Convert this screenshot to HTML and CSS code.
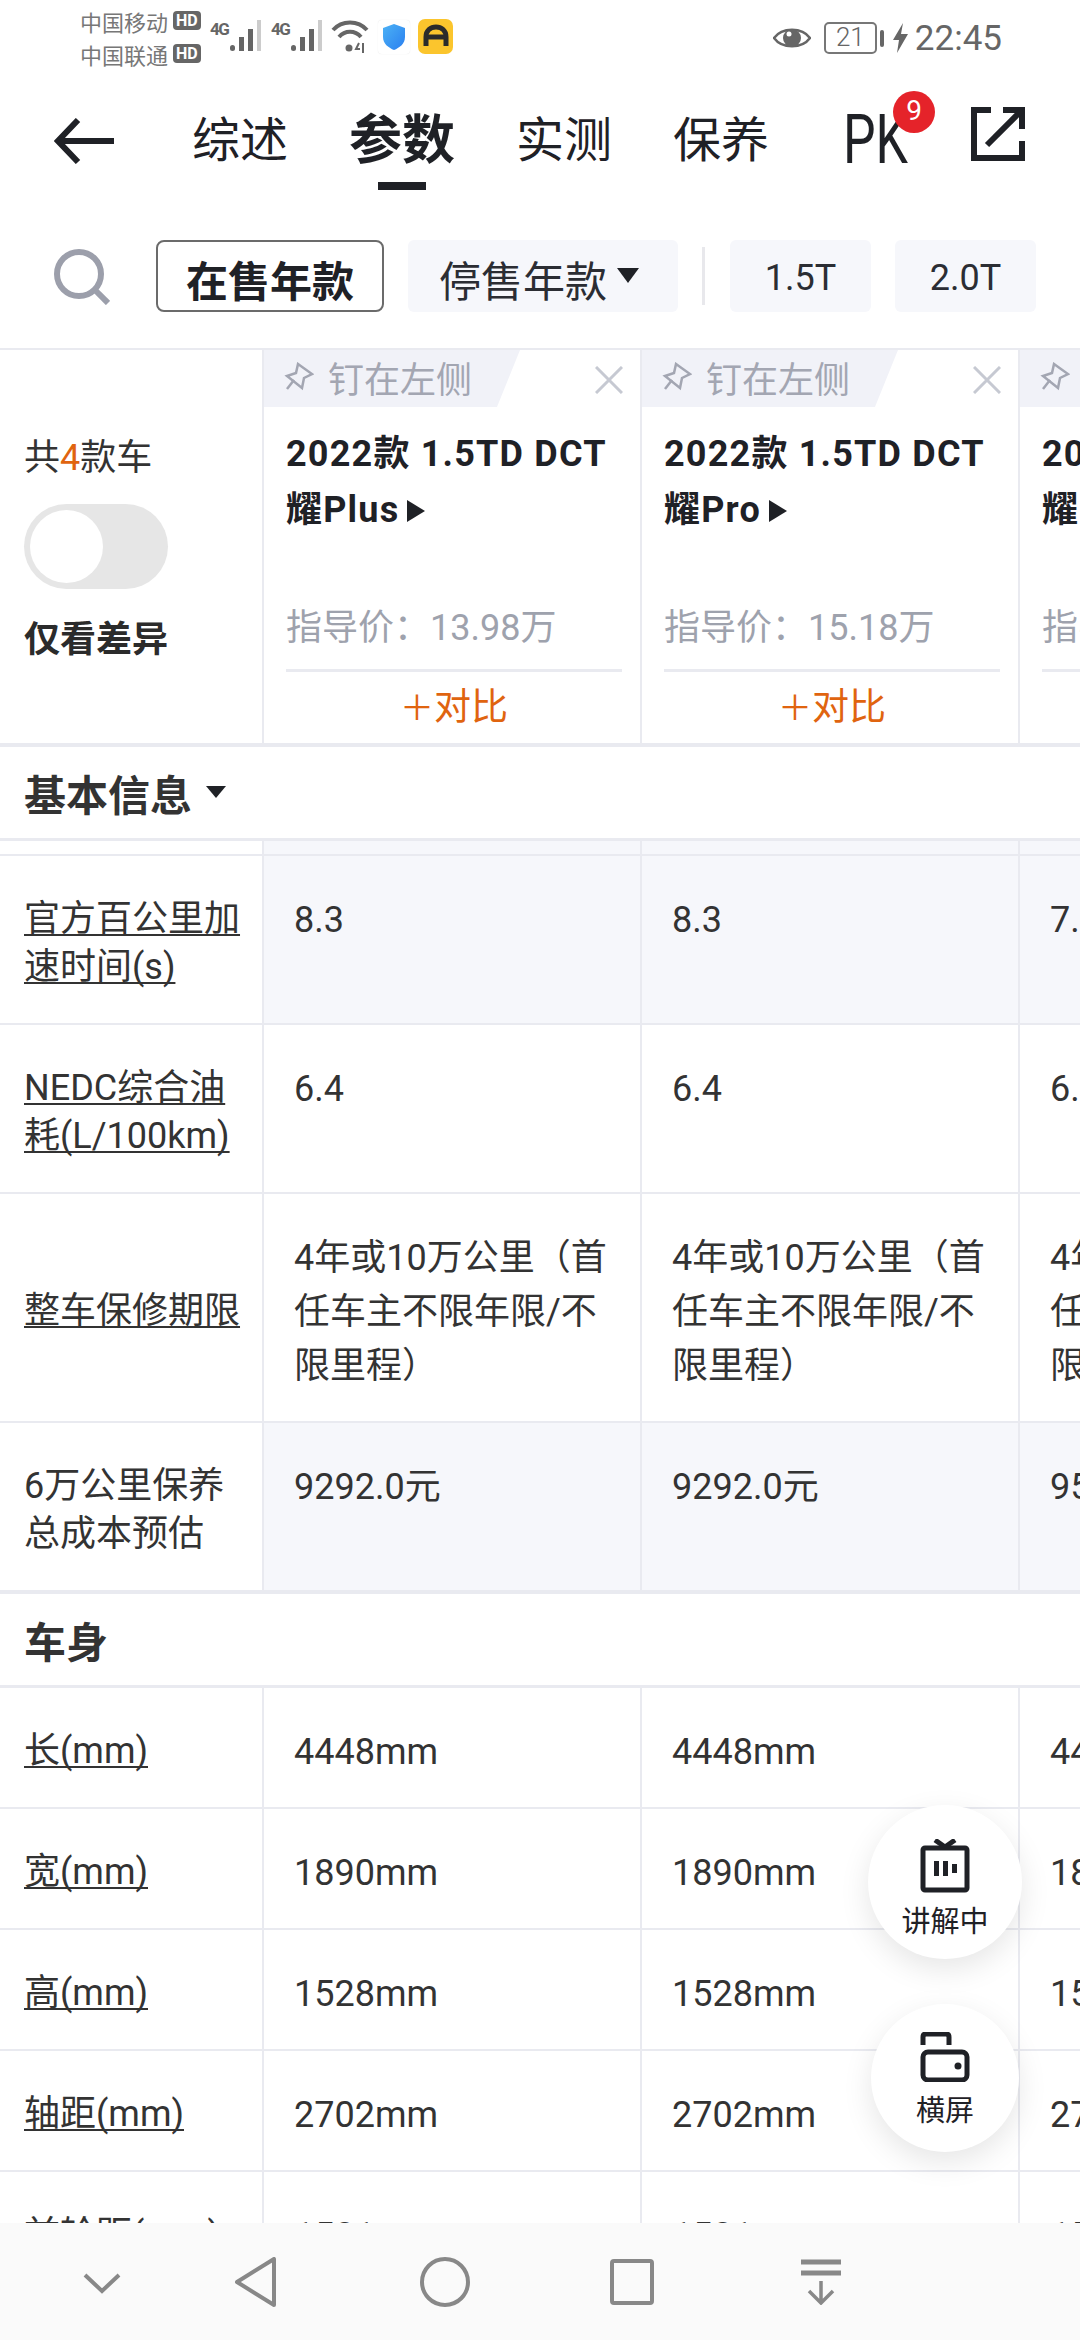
FILE: index.html
```html
<!DOCTYPE html>
<html>
  <head>
    <title>参数</title>
    <meta charset="UTF-8" />
    <link rel="stylesheet" href="styles.css">
  </head>
  <body>
    <div class="screen">
      <!-- system status bar -->
      <div class="status-bar">
        <div class="carriers">
          <div class="carrier">中国移动<span class="hd">HD</span></div>
          <div class="carrier">中国联通<span class="hd">HD</span></div>
        </div>
        <div class="signal">
          <span class="net">4G</span>
          <svg width="32" height="32" viewBox="0 0 32 32"><rect x="0" y="25" width="5" height="6" rx="2.5" fill="#666"/><rect x="9" y="17" width="5" height="14" fill="#666"/><rect x="18" y="9" width="5" height="22" fill="#666"/><rect x="27" y="0" width="4" height="31" fill="#ccc"/></svg>
        </div>
        <div class="signal">
          <span class="net">4G</span>
          <svg width="32" height="32" viewBox="0 0 32 32"><rect x="0" y="25" width="5" height="6" rx="2.5" fill="#666"/><rect x="9" y="17" width="5" height="14" fill="#666"/><rect x="18" y="9" width="5" height="22" fill="#666"/><rect x="27" y="0" width="4" height="31" fill="#ccc"/></svg>
        </div>
        <svg class="wifi" width="38" height="34" viewBox="0 0 38 34" fill="none" stroke="#666" stroke-width="4"><path d="M2 11C11 1 27 1 36 11"/><path d="M8 18C14 11 24 11 30 18"/><circle cx="18" cy="29" r="3.5" fill="#666" stroke="none"/><path d="M28 24L25 30H29M32 24V34" stroke-width="2"/></svg>
        <div class="shield">
          <svg width="24" height="28" viewBox="0 0 24 28"><defs><linearGradient id="sg" x1="0" y1="0" x2="1" y2="1"><stop offset="0" stop-color="#4cb2f5"/><stop offset="1" stop-color="#2a7ff0"/></linearGradient></defs><path d="M12 1L23 5V14C23 21 17 25 12 27C7 25 1 21 1 14V5Z" fill="url(#sg)"/></svg>
        </div>
        <div class="app-icon">
          <svg width="26" height="24" viewBox="0 0 26 24" fill="none" stroke="#2b2b2b" stroke-width="5"><path d="M3 22V13C3 6 8 3 13 3S23 6 23 13V22"/><path d="M3 13H23"/></svg>
        </div>
        <div class="status-right">
          <svg width="38" height="26" viewBox="0 0 38 26"><path d="M1 13C9 2 29 2 37 13C29 24 9 24 1 13Z" fill="none" stroke="#666" stroke-width="2.5"/><circle cx="19" cy="13" r="9" fill="#666"/><circle cx="16" cy="9" r="2.5" fill="#fff"/></svg>
          <div class="battery">21</div>
          <div class="battery-tip"></div>
          <svg class="bolt" width="15" height="30" viewBox="0 0 15 30"><path d="M10 0L0 17H6L4 30L15 11H8Z" fill="#666"/></svg>
          <span class="time">22:45</span>
        </div>
      </div>

      <!-- top tabs -->
      <div class="top-nav">
        <svg class="back" width="60" height="46" viewBox="0 0 60 46" fill="none" stroke="#1f2126" stroke-width="6"><path d="M24 2L4 23L24 44"/><path d="M4 23H60"/></svg>
        <div class="tabs">
          <div class="tab">综述</div>
          <div class="tab active">参数</div>
          <div class="tab">实测</div>
          <div class="tab">保养</div>
        </div>
        <div class="pk">
          <span class="pk-text">PK</span>
          <span class="badge">9</span>
        </div>
        <svg class="share" width="54" height="54" viewBox="0 0 54 54" fill="none" stroke="#1f2126" stroke-width="6"><path d="M20 3H3V51H51V34"/><path d="M32 3H51V22"/><path d="M51 3L16 38"/></svg>
      </div>

      <!-- year and engine filters -->
      <div class="filters">
        <svg class="search" width="56" height="56" viewBox="0 0 56 56" fill="none" stroke="#9c9fab" stroke-width="6"><circle cx="25" cy="25" r="22"/><path d="M41 41L54 54"/></svg>
        <div class="chip chip-on">在售年款</div>
        <div class="chip chip-year">停售年款<span class="caret"></span></div>
        <div class="chip-divider"></div>
        <div class="chip chip-engine">1.5T</div>
        <div class="chip chip-engine">2.0T</div>
      </div>

      <div class="table">
        <!-- car header -->
        <div class="row head-row">
          <div class="label-col head-label">
            <div class="total">共<span class="total-num">4</span>款车</div>
            <div class="toggle"><div class="knob"></div></div>
            <div class="diff">仅看差异</div>
          </div>
          <div class="car">
            <div class="car-top">
              <div class="pin"><svg width="30" height="30" viewBox="0 0 30 30" fill="none" stroke="#a3a6b2" stroke-width="2.5"><path d="M14 2L28 12L20 16L18 26L3 14L12 11Z"/><path d="M10 18L3 27"/></svg>钉在左侧</div>
              <svg class="close" width="28" height="28" viewBox="0 0 28 28" stroke="#c6c9d2" stroke-width="3"><path d="M1 1L27 27M27 1L1 27"/></svg>
            </div>
            <div class="car-name">2022款 1.5TD DCT<br>耀Plus<span class="play"></span></div>
            <div class="price">指导价：13.98万</div>
            <div class="compare"><span class="plus">＋</span>对比</div>
          </div>
          <div class="car">
            <div class="car-top">
              <div class="pin"><svg width="30" height="30" viewBox="0 0 30 30" fill="none" stroke="#a3a6b2" stroke-width="2.5"><path d="M14 2L28 12L20 16L18 26L3 14L12 11Z"/><path d="M10 18L3 27"/></svg>钉在左侧</div>
              <svg class="close" width="28" height="28" viewBox="0 0 28 28" stroke="#c6c9d2" stroke-width="3"><path d="M1 1L27 27M27 1L1 27"/></svg>
            </div>
            <div class="car-name">2022款 1.5TD DCT<br>耀Pro<span class="play"></span></div>
            <div class="price">指导价：15.18万</div>
            <div class="compare"><span class="plus">＋</span>对比</div>
          </div>
          <div class="car">
            <div class="car-top">
              <div class="pin"><svg width="30" height="30" viewBox="0 0 30 30" fill="none" stroke="#a3a6b2" stroke-width="2.5"><path d="M14 2L28 12L20 16L18 26L3 14L12 11Z"/><path d="M10 18L3 27"/></svg>钉在左侧</div>
            </div>
            <div class="car-name">2022款 2.0TD DCT<br>耀Max<span class="play"></span></div>
            <div class="price">指导价：16.58万</div>
          </div>
        </div>

        <div class="section-row">基本信息<span class="caret section-caret"></span></div>

        <!-- sliver of the row scrolled under the section header -->
        <div class="row sliver">
          <div class="label-col"></div>
          <div class="cell shaded"></div>
          <div class="cell shaded"></div>
          <div class="cell shaded"></div>
        </div>

        <div class="row">
          <div class="label-col"><a class="link">官方百公里加速时间(s)</a></div>
          <div class="cell shaded">8.3</div>
          <div class="cell shaded">8.3</div>
          <div class="cell shaded">7.6</div>
        </div>
        <div class="row">
          <div class="label-col"><a class="link">NEDC综合油耗(L/100km)</a></div>
          <div class="cell">6.4</div>
          <div class="cell">6.4</div>
          <div class="cell">6.8</div>
        </div>
        <div class="row">
          <div class="label-col"><a class="link">整车保修期限</a></div>
          <div class="cell">4年或10万公里（首任车主不限年限/不限里程）</div>
          <div class="cell">4年或10万公里（首任车主不限年限/不限里程）</div>
          <div class="cell">4年或10万公里（首任车主不限年限/不限里程）</div>
        </div>
        <div class="row section-end">
          <div class="label-col">6万公里保养总成本预估</div>
          <div class="cell shaded">9292.0元</div>
          <div class="cell shaded">9292.0元</div>
          <div class="cell shaded">9542.0元</div>
        </div>

        <div class="section-row">车身</div>

        <div class="row">
          <div class="label-col"><a class="link">长(mm)</a></div>
          <div class="cell">4448mm</div>
          <div class="cell">4448mm</div>
          <div class="cell">4448mm</div>
        </div>
        <div class="row">
          <div class="label-col"><a class="link">宽(mm)</a></div>
          <div class="cell">1890mm</div>
          <div class="cell">1890mm</div>
          <div class="cell">1890mm</div>
        </div>
        <div class="row">
          <div class="label-col"><a class="link">高(mm)</a></div>
          <div class="cell">1528mm</div>
          <div class="cell">1528mm</div>
          <div class="cell">1528mm</div>
        </div>
        <div class="row">
          <div class="label-col"><a class="link">轴距(mm)</a></div>
          <div class="cell">2702mm</div>
          <div class="cell">2702mm</div>
          <div class="cell">2702mm</div>
        </div>
        <div class="row">
          <div class="label-col"><a class="link">前轮距(mm)</a></div>
          <div class="cell">1581mm</div>
          <div class="cell">1581mm</div>
          <div class="cell">1581mm</div>
        </div>
      </div>

      <!-- floating buttons -->
      <div class="fab fab-live">
        <svg width="50" height="54" viewBox="0 0 50 54"><path d="M15 1L25 8L35 1" fill="none" stroke="#1f2126" stroke-width="5"/><rect x="3" y="9" width="44" height="42" rx="2" fill="none" stroke="#1f2126" stroke-width="5"/><rect x="14" y="22" width="5" height="15" fill="#1f2126"/><rect x="23" y="22" width="5" height="15" fill="#1f2126"/><rect x="32" y="25" width="5" height="9" fill="#1f2126"/></svg>
        <span>讲解中</span>
      </div>
      <div class="fab fab-rotate">
        <svg width="50" height="50" viewBox="0 0 50 50" fill="none" stroke="#1f2126" stroke-width="5"><path d="M3 13V5C3 3 4 2 6 2H26C28 2 29 3 29 5V13"/><rect x="3" y="20" width="44" height="28" rx="5"/><circle cx="38" cy="34" r="3.5" fill="#1f2126" stroke="none"/></svg>
        <span>横屏</span>
      </div>

      <!-- system nav bar -->
      <div class="sys-nav">
        <svg class="sys-down" width="38" height="22" viewBox="0 0 38 22" fill="none" stroke="#888" stroke-width="4"><path d="M2 3L19 19L36 3"/></svg>
        <svg class="sys-back" width="42" height="50" viewBox="0 0 42 50" fill="none" stroke="#888" stroke-width="4" stroke-linejoin="round"><path d="M39 2V48L2 25Z"/></svg>
        <svg class="sys-home" width="50" height="50" viewBox="0 0 50 50" fill="none" stroke="#888" stroke-width="4"><circle cx="25" cy="25" r="23"/></svg>
        <svg class="sys-recent" width="44" height="46" viewBox="0 0 44 46" fill="none" stroke="#888" stroke-width="4"><rect x="2" y="2" width="40" height="42" rx="2"/></svg>
        <svg class="sys-drawer" width="42" height="46" viewBox="0 0 42 46" fill="none" stroke="#888"><path d="M1 3H41M1 14H41" stroke-width="5"/><path d="M21 22V44M9 32L21 44L33 32" stroke-width="3.5"/></svg>
      </div>
    </div>
  </body>
</html>
```

FILE: styles.css
```css
* {
  box-sizing: border-box;
}
html,
body {
  margin: 0;
  padding: 0;
}
body {
  font-family: Roboto, "Noto Sans CJK SC", sans-serif;
  color: #333;
  background: #fff;
}
.screen {
  position: relative;
  width: 1080px;
  height: 2340px;
  overflow: hidden;
  background: #fff;
}

/* status bar */
.status-bar {
  display: flex;
  align-items: center;
  height: 74px;
  padding-left: 80px;
  color: #666;
}
.carriers {
  width: 130px;
}
.carrier {
  display: flex;
  align-items: center;
  height: 33px;
  font-size: 22px;
  color: #777;
}
.hd {
  margin-left: 5px;
  padding: 0 3px;
  height: 19px;
  line-height: 19px;
  font-size: 16px;
  font-weight: 700;
  color: #fff;
  background: #666;
  border-radius: 4px;
}
.signal {
  display: flex;
  align-items: flex-end;
  width: 61px;
  height: 32px;
  margin-top: -2px;
}
.signal svg {
  margin-left: 0;
}
.net {
  align-self: flex-start;
  width: 20px;
  font-size: 17px;
  font-weight: 700;
  line-height: 18px;
  letter-spacing: -1.5px;
  color: #666;
}
.wifi {
  margin-left: -1px;
  margin-top: -2px;
}
.shield {
  display: flex;
  align-items: center;
  justify-content: center;
  width: 32px;
  height: 34px;
  margin-left: 9px;
  border-radius: 4px;
  box-shadow: 0 0 1px #ddd;
}
.app-icon {
  display: flex;
  align-items: center;
  justify-content: center;
  width: 35px;
  height: 35px;
  margin-left: 8px;
  margin-top: -2px;
  background: #fbc52d;
  border-radius: 7px;
}
.status-right {
  display: flex;
  align-items: center;
  margin-left: auto;
  padding-right: 78px;
  margin-top: 2px;
}
.battery {
  width: 53px;
  height: 32px;
  margin-left: 13px;
  border: 2.5px solid #777;
  border-radius: 5px;
  font-size: 26px;
  line-height: 27px;
  text-align: center;
  color: #666;
  font-weight: 300;
}
.battery-tip {
  width: 4px;
  height: 17px;
  margin-left: 3px;
  background: #666;
  border-radius: 2px;
}
.bolt {
  margin-left: 9px;
}
.time {
  margin-left: 7px;
  font-size: 35px;
  color: #666;
}

/* tabs */
.top-nav {
  display: flex;
  align-items: center;
  height: 126px;
  padding-left: 54px;
  color: #1f2126;
}
.back {
  flex: none;
  margin-top: 7px;
}
.tabs {
  display: flex;
  align-items: center;
  gap: 61px;
  margin-left: 78px;
}
.tab {
  position: relative;
  font-size: 48px;
  line-height: 66px;
  margin-top: 8px;
}
.tab.active {
  font-size: 53px;
  font-weight: 700;
}
.tab.active::after {
  content: "";
  position: absolute;
  left: 29px;
  bottom: -16px;
  width: 48px;
  height: 8px;
  background: #1f2126;
}
.pk {
  position: relative;
  margin-left: 74px;
  width: 74px;
}
.pk-text {
  display: inline-block;
  font-size: 68px;
  line-height: 70px;
  transform: scaleX(0.76);
  transform-origin: left center;
  margin-top: 6px;
}
.badge {
  position: absolute;
  left: 50px;
  top: -8px;
  width: 42px;
  height: 42px;
  line-height: 40px;
  text-align: center;
  font-size: 28px;
  color: #fff;
  background: #e5232a;
  border-radius: 50%;
}
.share {
  margin-left: 54px;
  margin-top: -7px;
}

/* filters */
.filters {
  display: flex;
  align-items: center;
  height: 72px;
  margin-top: 40px;
  padding-left: 54px;
}
.search {
  flex: none;
  margin-right: 46px;
  margin-top: 2px;
}
.chip {
  display: flex;
  align-items: center;
  justify-content: center;
  height: 72px;
  padding-top: 4px;
  font-size: 42px;
  color: #2b2d33;
  background: #f6f7fb;
  border-radius: 6px;
}
.chip-on {
  width: 228px;
  background: #fff;
  border: 2px solid #6b6b6b;
  font-weight: 700;
  color: #1f2126;
  border-radius: 8px;
}
.chip-year {
  justify-content: flex-start;
  width: 270px;
  margin-left: 24px;
  padding-left: 31px;
}
.caret {
  display: inline-block;
  width: 0;
  height: 0;
  margin-left: 10px;
  margin-top: -6px;
  border-left: 11px solid transparent;
  border-right: 11px solid transparent;
  border-top: 15px solid #1f2126;
}
.chip-divider {
  width: 3px;
  height: 58px;
  margin: 0 25px 0 24px;
  background: #e8e8ec;
}
.chip-engine {
  width: 141px;
  font-size: 36px;
  margin-right: 24px;
}

/* table */
.table {
  width: 1400px;
  margin-top: 36px;
  border-top: 2px solid #e9eaf0;
}
.row {
  display: flex;
  align-items: stretch;
  border-bottom: 2px solid #e9eaf0;
}
.label-col {
  flex: none;
  display: flex;
  align-items: center;
  width: 264px;
  padding: 39px 16px 32px 24px;
  font-size: 36px;
  line-height: 48px;
  color: #333;
  border-right: 2px solid #e9eaf0;
}
.link {
  text-decoration: underline;
  text-decoration-thickness: 2px;
  text-decoration-skip-ink: none;
  text-underline-offset: 3px;
}
.cell {
  flex: none;
  width: 378px;
  padding: 37px 20px 28px 30px;
  font-size: 36px;
  line-height: 54px;
  color: #333;
  border-right: 2px solid #e9eaf0;
}
.shaded {
  background: #f6f7fb;
}
.sliver {
  height: 15px;
}
.sliver .label-col,
.sliver .cell {
  padding: 0;
}
.section-end {
  border-bottom-width: 4px;
}
.section-row {
  display: flex;
  align-items: center;
  height: 94px;
  padding-left: 24px;
  font-size: 42px;
  font-weight: 700;
  color: #333;
  border-bottom: 3px solid #e9eaf0;
}
.section-caret {
  margin-left: 14px;
  margin-top: -2px;
  border-left-width: 10px;
  border-right-width: 10px;
  border-top-width: 12px;
}

/* car header */
.head-row {
  height: 397px;
  border-bottom-width: 4px;
}
.head-label {
  flex-direction: column;
  align-items: flex-start;
  padding: 0 0 0 24px;
}
.total {
  margin-top: 84px;
  font-size: 36px;
  line-height: 48px;
  color: #333;
}
.total-num {
  color: #e0640f;
}
.toggle {
  width: 144px;
  height: 85px;
  margin-top: 22px;
  padding: 6px;
  background: #e6e6e6;
  border-radius: 43px;
}
.knob {
  width: 73px;
  height: 73px;
  background: #fff;
  border-radius: 50%;
}
.diff {
  margin-top: 27px;
  font-size: 36px;
  font-weight: 700;
  color: #2b2b2b;
}
.car {
  position: relative;
  flex: none;
  width: 378px;
  border-right: 2px solid #e9eaf0;
}
.car-top {
  height: 57px;
}
.pin {
  display: flex;
  align-items: center;
  gap: 14px;
  width: 256px;
  height: 57px;
  padding: 0 0 4px 20px;
  font-size: 36px;
  color: #a3a6b2;
  background: #f1f2f8;
  clip-path: polygon(0 0, 100% 0, 91% 100%, 0 100%);
}
.close {
  position: absolute;
  top: 16px;
  left: 331px;
}
.car-name {
  height: 197px;
  padding: 19px 0 0 22px;
  font-size: 36px;
  line-height: 56px;
  font-weight: 700;
  letter-spacing: 1.2px;
  color: #1f2126;
  white-space: nowrap;
}
.play {
  display: inline-block;
  width: 0;
  height: 0;
  margin-left: 8px;
  border-top: 11px solid transparent;
  border-bottom: 11px solid transparent;
  border-left: 18px solid #1f2126;
}
.price {
  margin-left: 22px;
  width: 336px;
  height: 68px;
  font-size: 36px;
  line-height: 48px;
  color: #9ea2ad;
  border-bottom: 3px solid #e9eaf0;
  white-space: nowrap;
}
.compare {
  margin-top: 12px;
  margin-left: 22px;
  width: 336px;
  font-size: 37px;
  line-height: 48px;
  text-align: center;
  color: #e0640f;
}
.plus {
  display: inline-block;
  width: 34px;
  font-size: 34px;
}

/* floating buttons */
.fab {
  position: absolute;
  display: flex;
  flex-direction: column;
  align-items: center;
  background: #fff;
  border-radius: 50%;
  box-shadow: 0 10px 30px rgba(0, 0, 0, 0.1);
  color: #1f2126;
  font-size: 29px;
}
.fab-live {
  left: 868px;
  top: 1805px;
  width: 154px;
  height: 154px;
  padding-top: 34px;
}
.fab-rotate {
  left: 871px;
  top: 2004px;
  width: 148px;
  height: 148px;
  padding-top: 28px;
}
.fab span {
  line-height: 40px;
  margin-top: 9px;
}

/* system nav bar */
.sys-nav {
  position: absolute;
  left: 0;
  right: 0;
  bottom: 0;
  height: 117px;
  background: #fafafa;
}
.sys-nav svg {
  position: absolute;
}
.sys-down {
  left: 83px;
  top: 49px;
}
.sys-back {
  left: 235px;
  top: 34px;
}
.sys-home {
  left: 420px;
  top: 34px;
}
.sys-recent {
  left: 610px;
  top: 36px;
}
.sys-drawer {
  left: 800px;
  top: 36px;
}
```
